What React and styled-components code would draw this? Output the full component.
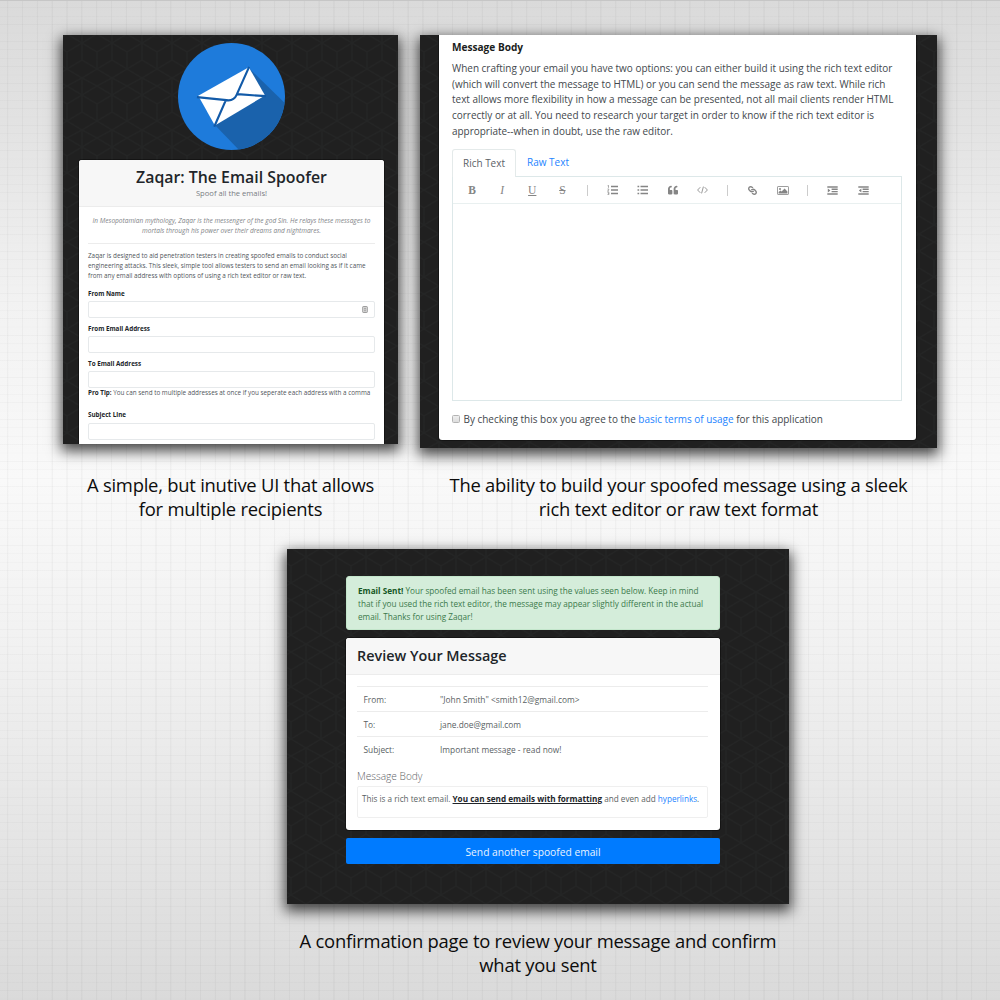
import React from 'react';
import styled, { createGlobalStyle, css } from 'styled-components';
import { FaQuoteLeft, FaLink } from 'react-icons/fa';

const sans = `'Open Sans', 'Noto Sans', sans-serif`;
const hexTile =
  "url(\"data:image/svg+xml,%3Csvg xmlns='http://www.w3.org/2000/svg' width='30' height='52' viewBox='0 0 30 52'%3E%3Cpath d='M0 9L15 0L30 9M15 0V17M0 9V26L15 17L30 26V9M0 26L15 35L30 26M15 35V52M0 43L15 52L30 43M0 43L15 35L30 43' fill='none' stroke='%23242525' stroke-width='1.2'/%3E%3C/svg%3E\")";

const GlobalStyle = createGlobalStyle`
  * { box-sizing: border-box; }
  body { margin: 0; font-family: ${sans}; }
  p, h1, h2 { margin: 0; }
`;

const Page = styled.main`
  width: 1000px;
  height: 1000px;
  overflow: hidden;
  padding: 35px 63px 0;
  display: flex;
  flex-direction: column;
  background:
    linear-gradient(#c6c6c6, #c6c6c6) 0 0 / 100% 1px no-repeat,
    repeating-linear-gradient(90deg, transparent 0 6.8px, rgba(0, 0, 0, 0.032) 7.3px 8.1px, transparent 8.6px 14.83px),
    repeating-linear-gradient(180deg, transparent 0 7.2px, rgba(0, 0, 0, 0.024) 7.6px 8px, transparent 8.4px),
    linear-gradient(#dadada 0%, #e2e2e2 12%, #f2f2f2 30%, #f9f9f9 48%, #f1f1f1 65%, #e4e4e4 85%, #dadada 100%);
`;

const Gallery = styled.div`
  display: flex;
  gap: 22px;
  height: 514px;
`;

const Figure = styled.figure`
  margin: 0;
  width: ${(p) => p.$width}px;
  align-self: flex-start;
  margin-left: ${(p) => p.$indent || 0}px;
  display: flex;
  flex-direction: column;
`;

const Frame = styled.div`
  box-shadow: 0 5px 13px 2px rgba(0, 0, 0, 0.72);
`;

const Shot = styled.div`
  height: ${(p) => p.$height}px;
  overflow: hidden;
  background: #202020 ${hexTile} 4px 8px;
  padding: ${(p) => p.$padding};
  display: flex;
  flex-direction: column;
`;

const Caption = styled.figcaption`
  margin-top: ${(p) => p.$gap}px;
  font-size: 18.4px;
  line-height: 24px;
  letter-spacing: -0.235px;
  text-align: center;
  white-space: nowrap;
  color: #0c0c0c;
`;

const Logo = styled.svg`
  display: block;
  width: 107px;
  height: 107px;
  margin: 0 auto 10px;
  flex: none;
`;

const Card = styled.section`
  background: #fff;
  border-radius: ${(p) => p.$radius || '3px'};
  flex: ${(p) => (p.$grow ? '1 1 0' : 'none')};
  min-height: 0;
  height: ${(p) => (p.$height ? p.$height + 'px' : 'auto')};
  overflow: hidden;
  box-shadow: 0 0 0 1px rgba(0, 0, 0, 0.35);
`;

const CardHeader = styled.header`
  background: #f7f7f7;
  border-bottom: 1px solid #ececec;
  height: ${(p) => p.$height}px;
  padding: ${(p) => p.$padding};
  text-align: ${(p) => (p.$center ? 'center' : 'left')};
`;

const Title = styled.h1`
  font-size: ${(p) => p.$size}px;
  line-height: 20px;
  font-weight: 600;
  color: #212529;
  white-space: nowrap;
`;

const Subtitle = styled.p`
  font-size: 7.6px;
  line-height: 12px;
  color: #777d82;
`;

const FormBody = styled.div`
  padding: 9px 9px 0 9px;
  font-size: 6.34px;
  line-height: 10px;
  color: #50555a;
  white-space: nowrap;
`;

const Myth = styled.p`
  font-size: 6.55px;
  font-style: italic;
  text-align: center;
  color: #7f8488;
  padding-bottom: 7px;
  border-bottom: 1px solid #ececec;
  margin: 0 0 7px;
`;

const Intro = styled.p`
  height: 37.5px;
`;

const Field = styled.div`
  height: ${(p) => p.$height || 35}px;
`;

const FieldName = styled.b`
  display: block;
  font-size: 6.27px;
  line-height: 10px;
  color: #212529;
`;

const Input = styled.div`
  height: 17px;
  margin-top: 2.5px;
  border: 1px solid #e6e9eb;
  border-radius: 2px;
  display: flex;
  align-items: center;
  justify-content: flex-end;
  padding-right: 6px;
`;

const Tip = styled.p`
  line-height: 10px;
  b { color: #212529; font-size: 6.27px; }
`;

const EditorBody = styled.div`
  padding: 2px 13px 0;
  color: #43484d;
  font-size: 9.96px;
  white-space: nowrap;
`;

const EditorHeading = styled.h2`
  font-size: 10.1px;
  line-height: 20px;
  color: #1a1d20;
`;

const Advice = styled.p`
  margin-top: 4px;
  line-height: 15.65px;
  height: 88px;
`;

const Tabs = styled.div`
  display: flex;
  height: 28px;
  margin-bottom: -1px;
`;

const Tab = styled.div`
  width: 64px;
  height: 28px;
  flex: none;
  text-align: center;
  line-height: 27px;
  font-size: 9.97px;
  color: ${(p) => (p.$active ? '#5c6166' : '#2484ff')};
  ${(p) =>
    p.$active &&
    css`
      position: relative;
      background: #fff;
      border: 1px solid #e4eaea;
      border-bottom: 0;
      border-radius: 3px 3px 0 0;
    `}
`;

const Editor = styled.div`
  width: 450px;
  height: 225px;
  border: 1px solid #dde8e9;
`;

const Toolbar = styled.div`
  height: 27px;
  padding-left: 4px;
  border-bottom: 1px solid #e9f0f0;
  display: flex;
  align-items: center;
`;

const Tool = styled.span`
  width: 30.1px;
  display: flex;
  justify-content: center;
  color: #858585;
  svg { display: block; }
`;

const Glyph = styled.span`
  font-family: 'Liberation Serif', serif;
  font-size: 11.5px;
  line-height: 12px;
  font-weight: ${(p) => (p.$bold ? 700 : 400)};
  font-style: ${(p) => (p.$italic ? 'italic' : 'normal')};
  text-decoration: ${(p) => p.$line || 'none'};
  text-decoration-thickness: 1px;
`;

const Rotated = styled.span`
  transform: rotate(90deg);
`;

const Divider = styled.span`
  width: 20px;
  height: 11px;
  background: linear-gradient(#ccc, #ccc) center / 1px 100% no-repeat;
`;

const Agreement = styled.div`
  display: flex;
  align-items: center;
  gap: 3.5px;
  height: 20px;
  margin-top: 8px;
`;

const Box = styled.span`
  width: 8px;
  height: 8px;
  margin-bottom: 1px;
  border: 1px solid #b4b4b4;
  border-radius: 1.5px;
  background: linear-gradient(#eee, #ddd);
`;

const Link = styled.span`
  color: #2484ff;
`;

const Alert = styled.div`
  height: 54px;
  flex: none;
  margin-bottom: 8px;
  padding: 7px 11px;
  border-radius: 3px;
  border: 1px solid #c3e6cb;
  background: #d4edda;
  color: #3b7a4b;
  font-size: 8.2px;
  line-height: 13px;
  white-space: nowrap;
  b { color: #155724; }
`;

const Review = styled.div`
  padding: 10.5px 12px 0 11px;
  color: #5a5f64;
  white-space: nowrap;
`;

const Row = styled.div`
  display: grid;
  grid-template-columns: 76.5px 1fr;
  height: 25.2px;
  line-height: 26px;
  padding-left: 6.5px;
  border-top: 1px solid #ececec;
  font-size: 8.35px;
`;

const BodyLabel = styled.div`
  margin-top: 5px;
  font-size: 10.15px;
  font-weight: 300;
  line-height: 20px;
  color: #5f6469;
`;

const Message = styled.div`
  height: 32px;
  border: 1px solid #efefef;
  border-radius: 2px;
  padding: 5px 0 0 4px;
  font-size: 8.16px;
  line-height: 13px;
  b { color: #212529; text-decoration: underline; }
`;

const Button = styled.div`
  height: 26px;
  flex: none;
  margin-top: 8px;
  border-radius: 2px;
  background: #007bff;
  color: #e9f3ff;
  text-align: center;
  font-size: 10.25px;
  line-height: 28px;
`;

const MailLogo = () => (
  <Logo viewBox="384 55 322 322">
    <clipPath id="disc"><circle cx="545" cy="216" r="161" /></clipPath>
    <circle cx="545" cy="216" r="161" fill="#1e7bdb" />
    <path clipPath="url(#disc)" fill="#1a62ac" d="M597 130L720 250V400H590L495 302Z" />
    <path fill="#fff" d="M445 214L597 128L646 213L495 303Z" />
    <path
      fill="none"
      stroke="#125aa8"
      strokeWidth="6.5"
      d="M441 218L530 227Q552 230 560 212L598 127M563 209L649 215M528 227L493 307"
    />
  </Logo>
);

const NumberList = () => (
  <svg width="11" height="10" viewBox="0 0 11 10">
    <path fill="none" stroke="currentColor" strokeWidth="1.5" d="M4 1.5h7M4 5h7M4 8.5h7" />
    <path fill="none" stroke="currentColor" strokeWidth=".7" d="M.6.7L1.5.3V2.8M.5 4h1.3v.8L.5 6h1.5M.5 7.3h1.4v2.3H.5M.9 8.4h1" />
  </svg>
);

const BulletList = () => (
  <svg width="11" height="10" viewBox="0 0 11 10">
    <path fill="none" stroke="currentColor" strokeWidth="1.6" d="M3.5 1.5h7.5M3.5 5h7.5M3.5 8.5h7.5M.5 1.5h1.7M.5 5h1.7M.5 8.5h1.7" />
  </svg>
);

const CodeIcon = () => (
  <svg width="11" height="8" viewBox="0 0 11 8" fill="none" stroke="currentColor" strokeWidth=".85">
    <path d="M3.3 1.2L.6 4l2.7 2.8M7.7 1.2L10.4 4 7.7 6.8M6.4.6L4.6 7.4" />
  </svg>
);

const PictureIcon = () => (
  <svg width="12" height="9" viewBox="0 0 12 9">
    <rect x=".5" y=".5" width="11" height="8" rx=".6" fill="none" stroke="currentColor" strokeWidth=".8" />
    <circle cx="3" cy="2.9" r="1" fill="currentColor" />
    <path fill="currentColor" d="M1.6 7.5V6L3.4 4.4l1.2 1.2L7.6 2.6l2.8 2.8v2.1z" />
  </svg>
);

const IndentIcon = ({ out }) => (
  <svg width="11" height="9" viewBox="0 0 11 9">
    <path fill="none" stroke="currentColor" strokeWidth="1.4" d="M.3 1h10.4M4.6 3.3h6.1M4.6 5.6h6.1M.3 8h10.4" />
    <path fill="currentColor" d={out ? 'M3.4 2.4v4.2L.8 4.5z' : 'M.8 2.4v4.2l2.6-2.1z'} />
  </svg>
);

const AutofillIcon = () => (
  <svg width="6" height="7" viewBox="0 0 6 7">
    <rect x=".7" y=".5" width="4.6" height="6" rx=".6" fill="#ddd" stroke="#888" strokeWidth=".8" />
    <path d="M2 2.3h2M3 2.3v2.4M2 4.8h2" stroke="#888" strokeWidth=".6" />
  </svg>
);

export default function App() {
  return (
    <Page>
      <GlobalStyle />
      <Gallery>
        <Figure $width={335}>
          <Frame>
            <Shot $height={409} $padding="8px 14px 0 16px">
              <MailLogo />
              <Card $grow $radius="3px 3px 0 0">
                <CardHeader $height={47} $padding="7px 0 0" $center>
                  <Title $size={15.87}>Zaqar: The Email Spoofer</Title>
                  <Subtitle>Spoof all the emails!</Subtitle>
                </CardHeader>
                <FormBody>
                  <Myth>
                    In Mesopotamian mythology, Zaqar is the messenger of the god Sin. He relays these messages to
                    <br />
                    mortals through his power over their dreams and nightmares.
                  </Myth>
                  <Intro>
                    Zaqar is designed to aid penetration testers in creating spoofed emails to conduct social
                    <br />
                    engineering attacks. This sleek, simple tool allows testers to send an email looking as if it came
                    <br />
                    from any email address with options of using a rich text editor or raw text.
                  </Intro>
                  <Field>
                    <FieldName>From Name</FieldName>
                    <Input><AutofillIcon /></Input>
                  </Field>
                  <Field>
                    <FieldName>From Email Address</FieldName>
                    <Input />
                  </Field>
                  <Field $height={51.5}>
                    <FieldName>To Email Address</FieldName>
                    <Input />
                    <Tip><b>Pro Tip:</b> You can send to multiple addresses at once if you seperate each address with a comma</Tip>
                  </Field>
                  <Field>
                    <FieldName>Subject Line</FieldName>
                    <Input />
                  </Field>
                </FormBody>
              </Card>
            </Shot>
          </Frame>
          <Caption $gap={29}>
            A simple, but inutive UI that allows
            <br />
            for multiple recipients
          </Caption>
        </Figure>
        <Figure $width={517}>
          <Frame>
            <Shot $height={413} $padding="0 21px 8px 19px">
              <Card $grow $radius="0 0 3px 3px">
                <EditorBody>
                  <EditorHeading>Message Body</EditorHeading>
                  <Advice>
                    When crafting your email you have two options: you can either build it using the rich text editor
                    <br />
                    (which will convert the message to HTML) or you can send the message as raw text. While rich
                    <br />
                    text allows more flexibility in how a message can be presented, not all mail clients render HTML
                    <br />
                    correctly or at all. You need to research your target in order to know if the rich text editor is
                    <br />
                    appropriate--when in doubt, use the raw editor.
                  </Advice>
                  <Tabs>
                    <Tab $active>Rich Text</Tab>
                    <Tab>Raw Text</Tab>
                  </Tabs>
                  <Editor>
                    <Toolbar>
                      <Tool><Glyph $bold>B</Glyph></Tool>
                      <Tool><Glyph $italic>I</Glyph></Tool>
                      <Tool><Glyph $line="underline">U</Glyph></Tool>
                      <Tool><Glyph $line="line-through">S</Glyph></Tool>
                      <Divider />
                      <Tool><NumberList /></Tool>
                      <Tool><BulletList /></Tool>
                      <Tool><FaQuoteLeft size={10} /></Tool>
                      <Tool><CodeIcon /></Tool>
                      <Divider />
                      <Tool><Rotated><FaLink size={9} /></Rotated></Tool>
                      <Tool><PictureIcon /></Tool>
                      <Divider />
                      <Tool><IndentIcon /></Tool>
                      <Tool><IndentIcon out /></Tool>
                    </Toolbar>
                  </Editor>
                  <Agreement>
                    <Box />
                    <span>
                      By checking this box you agree to the <Link>basic terms of usage</Link> for this application
                    </span>
                  </Agreement>
                </EditorBody>
              </Card>
            </Shot>
          </Frame>
          <Caption $gap={25}>
            The ability to build your spoofed message using a sleek
            <br />
            rich text editor or raw text format
          </Caption>
        </Figure>
      </Gallery>
      <Figure $width={502} $indent={224}>
        <Frame>
          <Shot $height={355} $padding="27px 69px 0 59px">
            <Alert>
              <b>Email Sent!</b> Your spoofed email has been sent using the values seen below. Keep in mind
              <br />
              that if you used the rich text editor, the message may appear slightly different in the actual
              <br />
              email. Thanks for using Zaqar!
            </Alert>
            <Card $height={192}>
              <CardHeader $height={37} $padding="8px 11px">
                <Title $size={14.4}>Review Your Message</Title>
              </CardHeader>
              <Review>
                <Row><span>From:</span><span>"John Smith" &lt;smith12@gmail.com&gt;</span></Row>
                <Row><span>To:</span><span>jane.doe@gmail.com</span></Row>
                <Row><span>Subject:</span><span>Important message - read now!</span></Row>
                <BodyLabel>Message Body</BodyLabel>
                <Message>
                  This is a rich text email. <b>You can send emails with formatting</b> and even add{' '}
                  <Link>hyperlinks</Link>.
                </Message>
              </Review>
            </Card>
            <Button>Send another spoofed email</Button>
          </Shot>
        </Frame>
        <Caption $gap={25}>
          A confirmation page to review your message and confirm
          <br />
          what you sent
        </Caption>
      </Figure>
    </Page>
  );
}
